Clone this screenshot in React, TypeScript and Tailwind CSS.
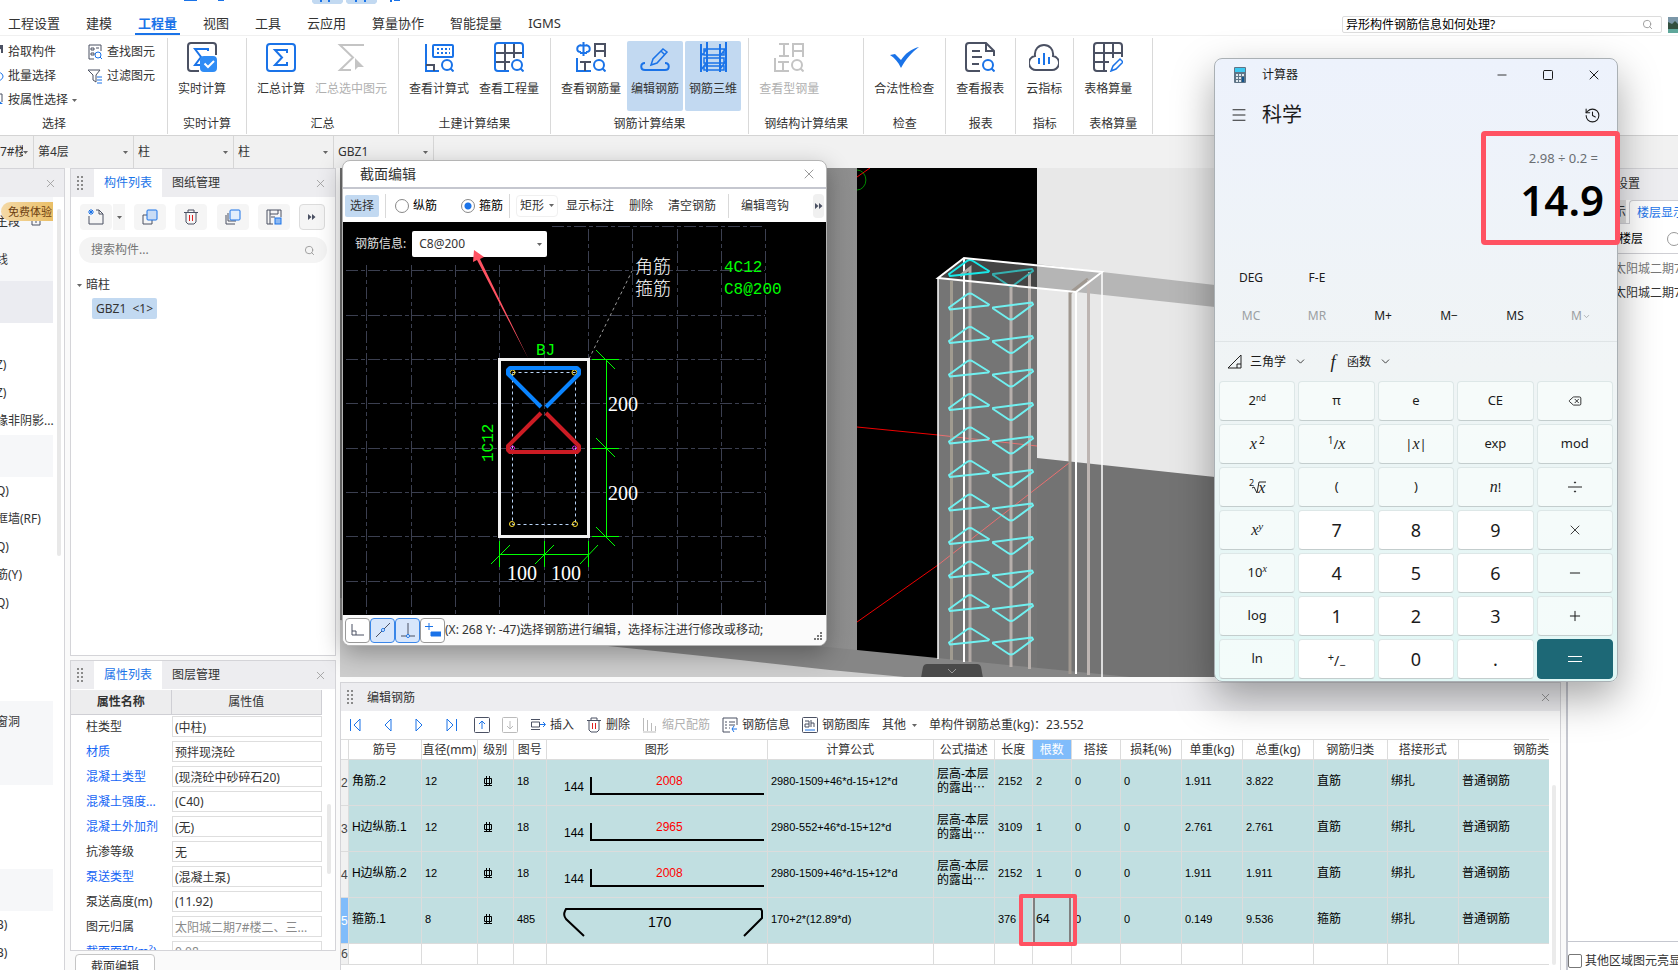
import type { ReactNode } from 'react';
import { ChevronDown, Delete, History, Menu, Minus, Plus, Search, Square, X } from 'lucide-react';
import { clsx } from 'clsx';

const BLUE = '#1a73e8';
const SLATE = '#4b5163';

const menu = ['工程设置', '建模', '工程量', '视图', '工具', '云应用', '算量协作', '智能提量', 'IGMS'];

type Tool = { label: string; icon: ReactNode; state?: 'active' | 'disabled' };

function Ico({ size = 30, children, color = BLUE }: { size?: number; children: ReactNode; color?: string }) {
  return (
    <svg
      width={size}
      height={size}
      viewBox={`0 0 ${size} ${size}`}
      fill="none"
      stroke={color}
      strokeWidth={size > 20 ? 2 : 1}
      className="shrink-0"
      aria-hidden="true"
    >
      {children}
    </svg>
  );
}

function Lens({ color = BLUE }: { color?: string }) {
  return (
    <g stroke={color}>
      <circle cx="23" cy="23" r="5" />
      <path d="M26.5 26.5l3 3" />
    </g>
  );
}

const groups: { label: string; tools: Tool[] }[] = [
  {
    label: '实时计算',
    tools: [
      {
        label: '实时计算',
        icon: (
          <Ico>
            <path d="M12 29H4a3 3 0 0 1-3-3V4a3 3 0 0 1 3-3h22a3 3 0 0 1 3 3v9" stroke={SLATE} />
            <path d="M21 9V7H8l6 8-6 8h6" />
            <rect x="14" y="15" width="15" height="14" rx="3" fill="#2f8cf5" stroke="#2f8cf5" />
            <path d="M17.500 21.500l3.500 3.500 6-6" stroke="#fff" />
          </Ico>
        ),
      },
    ],
  },
  {
    label: '汇总',
    tools: [
      {
        label: '汇总计算',
        icon: (
          <Ico>
            <rect x="1" y="2" width="28" height="27" rx="3" />
            <path d="M21 11V8H9l7 7.500L9 23h12v-3" />
          </Ico>
        ),
      },
      {
        label: '汇总选中图元',
        state: 'disabled',
        icon: (
          <Ico color="#c4c4c4">
            <path d="M28 3H4l13 12.500L4 28h11" />
            <path d="M19 16v12l3-3 6 0z" fill="#c4c4c4" stroke="none" />
          </Ico>
        ),
      },
    ],
  },
  {
    label: '土建计算结果',
    tools: [
      {
        label: '查看计算式',
        icon: (
          <Ico>
            <path d="M2 2v27h13" />
            <path d="M2 23h8v6" stroke={SLATE} />
            <rect x="9" y="3" width="20" height="12" rx="1" />
            <path d="M13 7h13M13 11h13" strokeDasharray="2 2" />
            <Lens />
          </Ico>
        ),
      },
      {
        label: '查看工程量',
        icon: (
          <Ico>
            <path d="M1 11h28M1 20h15M11 1v28M20 1v15" stroke={SLATE} />
            <path d="M15 29H4a3 3 0 0 1-3-3V4a3 3 0 0 1 3-3h22a3 3 0 0 1 3 3v12" />
            <Lens />
          </Ico>
        ),
      },
    ],
  },
  {
    label: '钢筋计算结果',
    tools: [
      {
        label: '查看钢筋量',
        icon: (
          <Ico>
            <path d="M7.500 0v14M5 3C0 4 0 10 5 10M10 3c5 1 5 7 0 7M4 3.500h7M4 11h7" />
            <path d="M19 15V2h10v13M19 9h10" stroke={SLATE} />
            <path d="M1 16v13h14" />
            <path d="M4 20h11M9 20v9" stroke={SLATE} />
            <Lens />
          </Ico>
        ),
      },
      {
        label: '编辑钢筋',
        state: 'active',
        icon: (
          <Ico>
            <path d="M11 23l2-6L23 7l4 3-10 11zM21 9l4 4" strokeWidth="1.500" />
            <path d="M5 21c-5 0-5 7 0 7h20c5 0 5-7 0-7" />
          </Ico>
        ),
      },
      {
        label: '钢筋三维',
        state: 'active',
        icon: (
          <Ico>
            <path d="M3 2v28M9 0v30M22 2v28M28 0v30" />
            <path d="M6 7h20v6H6zM6 16h20v5H6zM6 24h20v4H6zM3 14l6-7M3 28l6-8M22 27l6-8M22 14l6-8" strokeWidth="1.500" />
          </Ico>
        ),
      },
    ],
  },
  {
    label: '钢结构计算结果',
    tools: [
      {
        label: '查看型钢量',
        state: 'disabled',
        icon: (
          <Ico color="#c4c4c4">
            <path d="M5 2h10M10 2v12M5 14h10M19 15V2h10v13M19 9h10M1 16v13h14M4 20h11M9 20v9" />
            <Lens color="#c4c4c4" />
          </Ico>
        ),
      },
    ],
  },
  {
    label: '检查',
    tools: [
      {
        label: '合法性检查',
        icon: (
          <Ico>
            <path d="M1 13l5-1 6 6C17 11 22 7 30 5 22 11 17 17 12 26 9 20 6 16 1 13z" fill={BLUE} stroke="none" />
          </Ico>
        ),
      },
    ],
  },
  {
    label: '报表',
    tools: [
      {
        label: '查看报表',
        icon: (
          <Ico color={SLATE}>
            <path d="M15 29H4a3 3 0 0 1-3-3V4a3 3 0 0 1 3-3h17l8 8v5M21 1v8h8M7 9h8M7 15h10M7 22h7" />
            <Lens />
          </Ico>
        ),
      },
    ],
  },
  {
    label: '指标',
    tools: [
      {
        label: '云指标',
        icon: (
          <Ico color={SLATE}>
            <path d="M8 28a7 7 0 0 1-2-14C5 7 10 3 15 3s10 4 9 11a7 7 0 0 1-2 14z" />
            <path d="M10 16v6M15 11v12M20 15v7" stroke={BLUE} />
          </Ico>
        ),
      },
    ],
  },
  {
    label: '表格算量',
    tools: [
      {
        label: '表格算量',
        icon: (
          <Ico color={SLATE}>
            <path d="M14 29H4a3 3 0 0 1-3-3V4a3 3 0 0 1 3-3h22a3 3 0 0 1 3 3v11M1 11h28M1 20h15M11 1v28M20 1v15" />
            <path d="M18 29l2-5 7-7 3 3-7 7z" stroke={BLUE} strokeWidth="1.500" />
          </Ico>
        ),
      },
    ],
  },
];

const combos = [
  { label: '楼栋', value: '7#楼', cls: 'w-[34px]' },
  { label: '楼层', value: '第4层', cls: 'w-[100px] pl-1' },
  { label: '构件大类', value: '柱', cls: 'w-[100px] pl-1' },
  { label: '构件类型', value: '柱', cls: 'w-[100px] pl-1' },
  { label: '构件', value: 'GBZ1', cls: 'w-[100px] pl-1' },
];

const navItems: { text?: string; cls: string }[] = [
  { cls: 'h-[42px] bg-[#ebecf1]' },
  { cls: 'h-7' },
  { text: 'Z)', cls: 'h-7' },
  { text: 'Z)', cls: 'h-7' },
  { text: '缘非阴影...', cls: 'h-7' },
  { cls: 'h-[42px] bg-[#f6f7f9]' },
  { text: 'Q)', cls: 'h-7' },
  { text: '框墙(RF)', cls: 'h-7' },
  { text: 'Q)', cls: 'h-7' },
  { text: '筋(Y)', cls: 'h-7' },
  { text: 'Q)', cls: 'h-7' },
  { cls: 'h-[84px]' },
  { text: '窗洞', cls: 'h-[42px] bg-[#f6f7f9]' },
  { cls: 'h-[42px] bg-[#f6f7f9]' },
  { cls: 'h-[84px]' },
  { cls: 'h-[42px] bg-[#f6f7f9]' },
  { text: 'B)', cls: 'h-7' },
  { text: 'B)', cls: 'h-7' },
];

const props: { name: string; value: string; blue?: boolean; muted?: boolean }[] = [
  { name: '柱类型', value: '(中柱)' },
  { name: '材质', value: '预拌现浇砼', blue: true },
  { name: '混凝土类型', value: '(现浇砼中砂碎石20)', blue: true },
  { name: '混凝土强度...', value: '(C40)', blue: true },
  { name: '混凝土外加剂', value: '(无)', blue: true },
  { name: '抗渗等级', value: '无' },
  { name: '泵送类型', value: '(混凝土泵)', blue: true },
  { name: '泵送高度(m)', value: '(11.92)' },
  { name: '图元归属', value: '太阳城二期7#楼二、三...', muted: true },
  { name: '截面面积(m²)', value: '0.08', blue: true, muted: true },
];

const columns = [
  { label: '筋号', w: 'w-[73px]' },
  { label: '直径(mm)', w: 'w-[56px]' },
  { label: '级别', w: 'w-[36px]' },
  { label: '图号', w: 'w-[33px]' },
  { label: '图形', w: 'w-[221px]' },
  { label: '计算公式', w: 'w-[166px]' },
  { label: '公式描述', w: 'w-[61px]' },
  { label: '长度', w: 'w-[38px]' },
  { label: '根数', w: 'w-[39px]' },
  { label: '搭接', w: 'w-[49px]' },
  { label: '损耗(%)', w: 'w-[61px]' },
  { label: '单重(kg)', w: 'w-[61px]' },
  { label: '总重(kg)', w: 'w-[71px]' },
  { label: '钢筋归类', w: 'w-[74px]' },
  { label: '搭接形式', w: 'w-[71px]' },
];

const bars = [
  { no: 2, name: '角筋.2', dia: 12, shape: 18, mark: '2008', formula: '2980-1509+46*d-15+12*d', desc: true, len: 2152, count: 2, unit: '1.911', total: '3.822', kind: '直筋' },
  { no: 3, name: 'H边纵筋.1', dia: 12, shape: 18, mark: '2965', formula: '2980-552+46*d-15+12*d', desc: true, len: 3109, count: 1, unit: '2.761', total: '2.761', kind: '直筋' },
  { no: 4, name: 'H边纵筋.2', dia: 12, shape: 18, mark: '2008', formula: '2980-1509+46*d-15+12*d', desc: true, len: 2152, count: 1, unit: '1.911', total: '1.911', kind: '直筋' },
  { no: 5, name: '箍筋.1', dia: 8, shape: 485, mark: '170', formula: '170+2*(12.89*d)', desc: false, len: 376, count: 64, unit: '0.149', total: '9.536', kind: '箍筋' },
];

function Caret() {
  return (
    <svg width="5" height="3" viewBox="0 0 5 3" className="shrink-0" aria-hidden="true">
      <path d="M0 0h5L2.500 3z" fill="#666" />
    </svg>
  );
}

function DoubleArrow() {
  return (
    <svg width="8" height="6" viewBox="0 0 8 6" fill={SLATE} aria-hidden="true">
      <path d="M0 0l3.500 3L0 6zM4 0l3.500 3L4 6z" />
    </svg>
  );
}

function Grip() {
  return (
    <svg width="8" height="15" viewBox="0 0 8 15" fill="#8a8a8a" aria-hidden="true">
      {[0, 4, 8, 12].map((y) => (
        <g key={y}>
          <rect x="0" y={y} width="2" height="2" />
          <rect x="4" y={y} width="2" height="2" />
        </g>
      ))}
    </svg>
  );
}

function TopBar() {
  return (
    <header className="bg-white">
      <div className="flex h-9 items-stretch justify-between border-b border-[#f0f0f0]">
        <nav className="-ml-[5px] flex pt-[13px] text-[13px]">
          {menu.map((m) => (
            <a key={m} href="#" className="flex flex-col px-[10px]">
              <span className={clsx('px-[3px] leading-5', m === '工程量' && 'font-bold text-[#1a73e8]')}>{m}</span>
              {m === '工程量' && <span className="h-[3px] bg-[#1a73e8]" />}
            </a>
          ))}
        </nav>
        <div className="flex items-end gap-1.5 pb-[2px]">
          <label className="flex h-[17px] w-80 items-center rounded-xs border border-[#dcdcdc] pr-2 pl-[3px]">
            <input aria-label="搜索" defaultValue="异形构件钢筋信息如何处理?" className="min-w-0 flex-1 text-xs text-black outline-none" />
            <Search size={11} color="#999" />
          </label>
          <svg width="10" height="16" aria-hidden="true">
            <rect width="10" height="16" fill="#7b97a8" />
            <path d="M0 5l4 2 3-3 3 3v5H0z" fill="#33503f" />
            <path d="M0 12h10v4H0z" fill="#5fa79b" />
          </svg>
        </div>
      </div>
      <Ribbon />
    </header>
  );
}

function SmallTool({ label, children, caret }: { label: string; children: ReactNode; caret?: boolean }) {
  return (
    <button className="flex h-6 items-center gap-1 whitespace-nowrap">
      <Ico size={16} color={SLATE}>{children}</Ico>
      {label}
      {caret && <Caret />}
    </button>
  );
}

function Ribbon() {
  return (
    <div className="flex h-[100px] border-b border-[#d4d4d4] pt-[2px] pb-px text-xs">
      <div className="flex w-[168px] flex-col justify-between border-r border-[#d9d9d9]">
        <div className="-ml-3 flex gap-[10px] pt-[2px]">
          <div className="flex flex-col">
            <SmallTool label="拾取构件"><path d="M8 2h6v6M9 7l5-5M10 4h4v5" strokeWidth="2" /></SmallTool>
            <SmallTool label="批量选择"><path d="M2 8c0-4 12-6 13 0 0 3-3 5-6 5" stroke={BLUE} /></SmallTool>
            <SmallTool label="按属性选择" caret>
              <path d="M2 12V2h12v8" />
              <path d="M8 6v9l3-3h4z" fill={BLUE} stroke="none" />
            </SmallTool>
          </div>
          <div className="flex flex-col">
            <SmallTool label="查找图元">
              <path d="M7 15H2V1h12v6M4 4h3v2H4zM4 9h3v2H4zM9 4h3" />
              <g stroke={BLUE}><circle cx="11" cy="11" r="3" /><path d="M13 13l2 2" /></g>
            </SmallTool>
            <SmallTool label="过滤图元">
              <path d="M1 2h12L9 7v7l-3-2V7z" />
              <path d="M10 9h5M10 12h5M10 15h5" stroke={BLUE} />
            </SmallTool>
          </div>
        </div>
        <div className="w-[108px] text-center leading-5">选择</div>
      </div>
      {groups.map((g) => (
        <section key={g.label} className="flex flex-col justify-between border-r border-[#d9d9d9]">
          <div className="flex gap-0.5 pt-[3px] pr-[7px] pl-1.5">
            {g.tools.map((t) => (
              <button
                key={t.label}
                disabled={t.state === 'disabled'}
                className={clsx(
                  'flex h-[70px] flex-col items-center rounded-xs px-1 pt-px whitespace-nowrap',
                  t.state === 'active' && 'bg-[#c2d9f1]',
                  t.state === 'disabled' && 'text-[#b0b0b0]'
                )}
              >
                {t.icon}
                <span className="mt-[9px] leading-4">{t.label}</span>
              </button>
            ))}
          </div>
          <div className="px-[15px] text-center leading-5">{g.label}</div>
        </section>
      ))}
    </div>
  );
}

function ComboBar() {
  return (
    <div className="flex h-8 bg-[#f1f1f1] text-xs">
      {combos.map((c, i) => (
        <label key={i} className={clsx('flex items-center border-r border-[#d6d6d6] pr-[5px]', c.cls)}>
          <select aria-label={c.label} className="min-w-0 flex-1 appearance-none bg-transparent outline-none">
            <option>{c.value}</option>
          </select>
          <Caret />
        </label>
      ))}
    </div>
  );
}

function NavTree() {
  return (
    <aside className="flex w-[65px] shrink-0 flex-col overflow-hidden border-t border-r border-[#d4d4d8] bg-white">
      <div className="flex h-7 shrink-0 items-center justify-end bg-[#ededf0] pr-[7px]">
        <button aria-label="关闭"><X size={13} strokeWidth={1.5} color="#999" /></button>
      </div>
      <div className="flex gap-1">
        <div className="w-[53px]">
          <div className="h-[84px] bg-[#f6f7f9] pt-[5px]">
            <div className="relative h-6 leading-6">
              <span className="absolute top-2 -left-1">主段</span>
              <svg width="10" height="12" viewBox="0 0 10 12" fill="none" stroke={SLATE} className="absolute top-3 left-[31px]" aria-hidden="true">
                <path d="M1 5h8v6H1zM3 5V1h4v4M5 7v2" />
              </svg>
              <span className="absolute top-0 right-0 h-[19px] rounded-l-full bg-linear-to-r from-[#f4d9a6] to-[#eabf66] pr-px pl-[7px] text-[11px] leading-[19px] text-[#6b3d10]">
                免费体验
              </span>
            </div>
            <div className="mt-[20px] -ml-1 leading-7">线</div>
          </div>
          {navItems.map((n, i) => (
            <div key={i} className={clsx('flex items-center whitespace-nowrap', n.cls)}>
              <span className="-ml-1">{n.text}</span>
            </div>
          ))}
        </div>
        <div className="mt-3 h-[347px] w-1 rounded-full bg-[#e8e8e8]" />
      </div>
    </aside>
  );
}

function PanelTabs({ active, other }: { active: string; other: string }) {
  return (
    <div className="flex h-7 shrink-0 items-center bg-[#ededf0] pl-1.5">
      <Grip />
      <button className="ml-[9px] h-7 bg-white px-[10px] text-[#1a73e8]">{active}</button>
      <button className="h-7 px-[10px]">{other}</button>
      <button aria-label="关闭" className="ml-auto pr-2"><X size={13} strokeWidth={1.5} color="#999" /></button>
    </div>
  );
}

function ToolBtn({ label, children }: { label: string; children: ReactNode }) {
  return (
    <button aria-label={label} className="flex h-[26px] w-8 items-center justify-center rounded-sm bg-[#f5f5f5]">
      {children}
    </button>
  );
}

function TrashIcon() {
  return (
    <Ico size={16} color={SLATE}>
      <path d="M1 3.500h14M5 3V1h6v2M3 4v9l2 2h6l2-2V4" />
      <path d="M6.500 6v6M9.500 6v6" stroke="#e02020" />
    </Ico>
  );
}

function ComponentList() {
  return (
    <section className="flex min-h-0 flex-1 flex-col border border-[#d4d4d8] bg-white">
      <PanelTabs active="构件列表" other="图纸管理" />
      <div className="flex justify-between pt-[7px] pr-[10px] pl-[9px]">
        <div className="flex gap-px">
          <ToolBtn label="新建">
            <Ico size={16} color={SLATE}>
              <path d="M1 7v8h14V5l-4-4H8M11 1v4h4" />
              <path d="M1 1l4 4M5 1L1 5M3 0v6M0 3h6" stroke={BLUE} />
            </Ico>
          </ToolBtn>
          <button aria-label="更多新建" className="flex w-3 items-center justify-center bg-[#f5f5f5]"><Caret /></button>
        </div>
        <ToolBtn label="复制">
          <Ico size={16} color={SLATE}>
            <path d="M5 6H1v9h9v-4" />
            <rect x="5" y="1" width="10" height="10" rx="1" fill="#c9dcf5" stroke={BLUE} />
          </Ico>
        </ToolBtn>
        <ToolBtn label="删除"><TrashIcon /></ToolBtn>
        <ToolBtn label="层间复制">
          <Ico size={16} color={SLATE}>
            <path d="M3 4v8h8M1 6v9h9" />
            <rect x="5" y="1" width="10" height="10" rx="1" fill="#e2eefc" stroke={BLUE} />
          </Ico>
        </ToolBtn>
        <ToolBtn label="存档">
          <Ico size={16} color={SLATE}>
            <path d="M7 15H1V1h14v7M4 1v14M4 5h8V1M5 8h4" />
            <rect x="9" y="9" width="6" height="6" fill="#8db9f2" stroke={BLUE} />
          </Ico>
        </ToolBtn>
        <button aria-label="更多" className="flex h-[26px] w-[26px] items-center justify-center rounded-sm border border-[#dcdcdc] bg-[#f5f5f5]">
          <DoubleArrow />
        </button>
      </div>
      <label className="mx-2 mt-[7px] flex h-[26px] items-center rounded-full bg-[#f4f4f4] px-3">
        <input aria-label="搜索构件" placeholder="搜索构件..." className="min-w-0 flex-1 outline-none placeholder:text-[#757575]" />
        <Search size={11} color="#999" />
      </label>
      <div className="pt-3 pl-1.5">
        <div className="flex h-5 items-center gap-1"><Caret />暗柱</div>
        <button className="mt-[3px] ml-[15px] h-[21px] rounded-xs bg-[#c2d9f1] px-1 whitespace-pre">GBZ1  &lt;1&gt;</button>
      </div>
    </section>
  );
}

function PropertyPanel() {
  return (
    <section className="mt-1 flex h-[291px] shrink-0 flex-col overflow-hidden border border-[#d4d4d8] bg-white">
      <PanelTabs active="属性列表" other="图层管理" />
      <div className="flex pt-px">
        <table className="min-w-0 flex-1 table-fixed border-collapse">
          <thead>
            <tr className="h-6 border-b border-[#cfcfd4] bg-[#ededee]">
              <th className="w-[100px] border-r border-[#cfcfd4] font-bold">属性名称</th>
              <th className="border-r border-[#cfcfd4] font-normal">属性值</th>
            </tr>
          </thead>
          <tbody>
            {props.map((p) => (
              <tr key={p.name} className="h-[25px]">
                <td className={clsx('pl-[15px] whitespace-nowrap', p.blue && 'text-[#1565f5]')}>{p.name}</td>
                <td className="pl-px">
                  <input
                    aria-label={p.name}
                    defaultValue={p.value}
                    className={clsx('block h-[21px] w-full border border-[#dedede] px-[2px] outline-none', p.muted && 'text-[#8a8a8a]')}
                  />
                </td>
              </tr>
            ))}
          </tbody>
        </table>
        <div className="mt-[114px] mr-1 ml-[5px] h-[70px] w-1 rounded-full bg-[#e8e8e8]" />
      </div>
    </section>
  );
}

const tiers = [0, 1, 2, 3, 4, 5, 6, 7, 8, 9, 10, 11];

function Viewport() {
  return (
    <div className="relative min-h-0 flex-1 overflow-hidden bg-[#8e8e8e]">
      <svg viewBox="340 168 1221 510" preserveAspectRatio="xMinYMin slice" className="absolute inset-0 h-full w-full" fill="none" aria-label="钢筋三维">
        <defs>
          <linearGradient id="wall" x1="0" x2="1">
            <stop offset="0" stopColor="#6e6e6e" />
            <stop offset="1" stopColor="#8f8f8f" />
          </linearGradient>
        </defs>
        <rect x="340" y="168" width="517" height="510" fill="url(#wall)" />
        <rect x="857" y="168" width="180" height="510" fill="#000" />
        <rect x="1037" y="168" width="525" height="510" fill="#e8e8e8" />
        <path d="M1037 458l178 19 347 36v165h-525z" fill="#737373" />
        <path d="M1102 272l113 13 347 38v22l-347-38-139-15z" fill="#b6b6b6" />
        <path d="M938 278l99 10v390h-99z" fill="#757575" />
        <path d="M938 278l26-20 73 6v24z" fill="#444" />
        <path d="M1037 264l65 8-26 20-39-4z" fill="#b5b5b5" />
        <path d="M340 598l517 52 283 28H340z" fill="#868686" />
        <path d="M340 620l268 26 132 14 90 10 85 8H340z" fill="#cdcdcd" />
        <g stroke="#e00">
          <path d="M857 427l81 8M857 622l81-57M857 177l13-9" />
          <path d="M938 435l99 11M938 565l131-102" stroke="#e87070" />
        </g>
        <path d="M857 170a8 9 0 0 1 0 20" stroke="#080" />
        <path d="M1076 292V674M964 258V662" stroke="#fff" strokeWidth="2" />
        <path d="M938 278V659M1102 272V677" stroke="#fff" strokeWidth="1.500" />
        <path d="M951.500 281V660" stroke="#a09b90" strokeWidth="3" />
        <path d="M960 276l10-8V662" stroke="#b0a8a4" strokeWidth="3" />
        <path d="M1011 286V667M1029.500 272V669" stroke="#b8b0ac" strokeWidth="3" />
        <path d="M1070 674V293l18-14" stroke="#a09890" strokeWidth="3" />
        <path d="M1088.500 280V675" stroke="#bdb5b2" strokeWidth="3" />
        {tiers.map((t) => (
          <g key={t} transform={`translate(0 ${t * 33.5})`} strokeWidth="2" strokeLinejoin="round" stroke={t ? '#70f0f0' : '#18e8e8'}>
            <path d="M949 274l18-13q3-2 6 0l16 10-1 1-38 4z" />
            <path d="M993 274l39-5 1 2-19 14q-3 2-6 0l-15-10z" stroke={t ? '#70f0f0' : '#35b0b0'} />
          </g>
        ))}
        <path d="M938 278l26-20 138 14-26 20z" stroke="#fff" strokeWidth="2" />
        <path d="M921 678l2-11q1-3 4-3h50q3 0 4 3l2 11z" fill="#4a4a4a" />
        <path d="M948 669l4 4 4-4" stroke="#999" />
      </svg>
    </div>
  );
}

function BarShape({ mark, stirrup }: { mark: string; stirrup: boolean }) {
  return (
    <svg width="220" height="42" viewBox="0 0 220 42" fill="none" stroke="#000" strokeWidth="2" className="block">
      {stirrup ? (
        <>
          <path d="M37 36L19 19q-3-4-1-8l1-2h195l1 2v7l-18 18" />
          <text x="101" y="27" fontSize="14" fill="#000" stroke="none">{mark}</text>
        </>
      ) : (
        <>
          <path d="M44 15v17h173" />
          <text x="17" y="29" fontSize="12" fill="#000" stroke="none">144</text>
          <text x="109" y="23" fontSize="12" fill="#f00" stroke="none">{mark}</text>
        </>
      )}
    </svg>
  );
}

function RebarTool({ label, icon, disabled }: { label: string; icon: ReactNode; disabled?: boolean }) {
  return (
    <button disabled={disabled} className={clsx('flex items-center gap-1 whitespace-nowrap', disabled && 'text-[#b0b0b0]')}>
      {icon}
      {label}
    </button>
  );
}

function RebarPanel() {
  return (
    <section className="mt-[5px] shrink-0 border-t border-r border-l border-[#d4d4d8] bg-white pb-[5px]">
      <div className="flex h-7 items-center bg-[#ededf0] pr-2 pl-1.5">
        <Grip />
        <h2 className="ml-3 pt-px">编辑钢筋</h2>
        <button aria-label="关闭" className="ml-auto"><X size={13} strokeWidth={1.5} color="#888" /></button>
      </div>
      <div className="flex h-7 items-center gap-3 pl-2">
        <div className="mr-1 flex gap-[15px]">
          {[
            ['首行', 'M1.500 2v12M11 2v12L5 8z'],
            ['上一行', 'M11 2v12L5 8z'],
            ['下一行', 'M5 2v12l6-6z'],
            ['末行', 'M5 2v12l6-6zM14.500 2v12'],
          ].map(([name, d]) => (
            <button key={name} aria-label={name}><Ico size={16}><path d={d} /></Ico></button>
          ))}
        </div>
        <button aria-label="上移">
          <Ico size={16} color={SLATE}><rect x="0.500" y="0.500" width="15" height="15" rx="1" /><path d="M8 12V4M5 7l3-3 3 3" stroke={BLUE} /></Ico>
        </button>
        <button aria-label="下移" disabled>
          <Ico size={16} color="#bbb"><rect x="0.500" y="0.500" width="15" height="15" rx="1" /><path d="M8 4v8M5 9l3 3 3-3" /></Ico>
        </button>
        <RebarTool label="插入" icon={<Ico size={16} color={SLATE}><path d="M1 2.500h9M1 12.500h9M1.500 5h8v5h-8z" /><path d="M10 7.500h5M13 5l2.500 2.500L13 10" stroke={BLUE} /></Ico>} />
        <RebarTool label="删除" icon={<TrashIcon />} />
        <RebarTool label="缩尺配筋" disabled icon={<Ico size={16} color="#bbb"><path d="M1.500 1v13M5.500 3v11M9.500 6v8M13.500 9v5M1 15h13" /></Ico>} />
        <RebarTool label="钢筋信息" icon={<Ico size={16} color={SLATE}><path d="M8 15H1V1h14v7M3 5h2M7 5h6M3 8h2M7 8h6M3 11h2M7 11h1" /><path d="M10 12h5M12 9l-2 3 2 3" stroke={BLUE} /></Ico>} />
        <RebarTool label="钢筋图库" icon={<Ico size={16} color={SLATE}><rect x="0.500" y="0.500" width="15" height="15" rx="1" /><path d="M3 4h4v6H3V7h4M9 3v7M9 6h3v4" /><path d="M3 13h10" stroke={BLUE} /></Ico>} />
        <button className="flex items-center gap-1.5">其他<Caret /></button>
        <span>单构件钢筋总重(kg)：23.552</span>
      </div>
      <div className="flex">
        <table className="min-w-0 flex-1 table-fixed border-collapse">
          <thead>
            <tr className="h-5">
              <th aria-label="行号" className="w-[7px] border border-l-0 border-[#dcdcdc]" />
              {columns.map((c) => (
                <th
                  key={c.label}
                  className={clsx(
                    'border border-[#dcdcdc] p-0 font-normal whitespace-nowrap',
                    c.w,
                    c.label === '根数' && 'bg-[#80bcfb] text-white'
                  )}
                >
                  {c.label}
                </th>
              ))}
              <th className="border-y border-[#dcdcdc] p-0 text-right font-normal">钢筋类</th>
            </tr>
          </thead>
          <tbody className="text-black">
            {bars.map((b) => (
              <tr
                key={b.no}
                className="h-[46px] bg-[#c1dfe1] font-['Liberation_Sans','Noto_Sans_CJK_SC',sans-serif] text-[11px] [&>td]:border [&>td]:border-[#dcdcdc] [&>td]:px-[3px] [&>td]:pt-0 [&>td]:pb-[3px] [&>td]:whitespace-nowrap"
              >
                <th className={clsx('border-b border-[#dcdcdc] p-0 text-xs font-normal', b.no === 5 ? 'bg-[#80bcfb] text-white' : 'bg-[#f1f1f1] text-[#444]')}>
                  {b.no}
                </th>
                <td className="text-xs">{b.name}</td>
                <td>{b.dia}</td>
                <td>
                  <svg width="10" height="11" viewBox="0 0 10 11" fill="none" stroke="#000" className="ml-0.5" aria-label="三级钢">
                    <path d="M1.500 2.500h7v5h-7zM3.500 0v10M6.500 0v10M1 9.500h8" />
                  </svg>
                </td>
                <td>{b.shape}</td>
                <td className="!p-0"><BarShape mark={b.mark} stirrup={b.no === 5} /></td>
                <td>{b.formula}</td>
                <td className="text-xs leading-[14px]">{b.desc && <>层高-本层<br />的露出⋯</>}</td>
                <td>{b.len}</td>
                <td className={clsx(b.no === 5 && "relative font-['Noto_Sans',sans-serif] text-xs")}>
                  {b.count}
                  {b.no === 5 && (
                    <>
                      <span className="absolute inset-y-0 left-0 border-l-2 border-[#808080]" />
                      <span className="absolute inset-y-0 right-0 border-r-2 border-[#808080]" />
                      <span className="absolute -top-1 -right-1.5 -bottom-[3px] -left-3.5 z-10 rounded-xs border-4 border-[#ff5262]" />
                    </>
                  )}
                </td>
                <td>0</td>
                <td>0</td>
                <td>{b.unit}</td>
                <td>{b.total}</td>
                <td className="text-xs">{b.kind}</td>
                <td className="text-xs">绑扎</td>
                <td className="!border-r-0 text-xs">普通钢筋</td>
              </tr>
            ))}
            <tr className="h-[21px] [&>td]:border [&>td]:border-[#dcdcdc]">
              <th className="border-b border-[#dcdcdc] bg-[#f1f1f1] p-0 font-normal text-[#444]">6</th>
              {columns.map((c) => <td key={c.label} />)}
              <td className="!border-r-0" />
            </tr>
          </tbody>
        </table>
        <div className="mt-[46px] mr-1 ml-[3px] w-1 rounded-full bg-[#ebebeb]" />
      </div>
    </section>
  );
}

function DisplayPanel() {
  return (
    <aside className="ml-[5px] flex w-[112px] shrink-0 flex-col overflow-hidden border-l-2 border-[#c5c7cf] bg-white whitespace-nowrap">
      <div className="h-8 shrink-0 border-t border-[#d4d4d8] bg-[#ededf0] pl-[24px] leading-[30px]">显示设置</div>
      <div className="flex h-6 shrink-0 border-b border-[#cfcfd4]">
        <button className="w-[63px] bg-[#dcdcdc] pl-[10px]">图元显示</button>
        <button className="ml-[3px] h-6 rounded-tl-sm border-t border-l border-[#cfcfd4] bg-white pr-1 pl-[7px] text-[#1a73e8]">楼层显示</button>
      </div>
      <div className="flex h-[30px] shrink-0 items-center border-b border-[#cfcfd4] text-black">
        <label className="flex items-center gap-1 pl-[9px]">
          <input type="radio" name="floor" defaultChecked className="size-3.5" />
          当前楼层
        </label>
        <label className="ml-6 flex items-center gap-1">
          <input type="radio" name="floor" className="size-3.5 appearance-none rounded-full border border-[#999]" />
          全部楼层
        </label>
      </div>
      <ul className="flex-1 overflow-hidden border-b border-[#c5c7cf] pt-[3px] pl-[46px] leading-6">
        <li className="text-[#777]">太阳城二期7#楼</li>
        <li>太阳城二期7#楼</li>
      </ul>
      <label className="flex h-7 shrink-0 items-center gap-[3px] pt-2.5">
        <input type="checkbox" className="size-3.5 shrink-0 appearance-none rounded-xs border border-[#777] bg-white" />
        其他区域图元亮显
      </label>
    </aside>
  );
}

const gridX = [366.5, 411.5, 455.5, 499.5, 544.5];
const gridX2 = [588.5, 632.5, 677.5, 721.5, 765.5];
const gridY = [270.5, 315.5, 359.5, 403.5, 448.5, 492.5, 536.5, 581.5];

function SectionDrawing() {
  return (
    <svg viewBox="343 222 483 393" className="block w-full" fill="none" aria-label="截面图">
      <g stroke="#3b3f50" strokeDasharray="12 3 4 3">
        {gridX.map((x) => <path key={x} d={`M${x} 265V615`} />)}
        {gridX2.map((x) => <path key={x} d={`M${x} 229V615`} />)}
        {gridY.map((y) => <path key={y} d={`M346 ${y}H765`} />)}
        <path d="M552 226.500H765" />
      </g>
      <path d="M589 359l43-88" stroke="#999" strokeDasharray="3 3" />
      <rect x="512.500" y="372.500" width="63" height="152" stroke="#b8d4f8" strokeDasharray="3 3" />
      <rect x="499.500" y="359.500" width="89" height="177" stroke="#f2f2f2" strokeWidth="3" />
      <g stroke="#ffe030">
        <circle cx="512.500" cy="372.500" r="2.500" />
        <circle cx="574.500" cy="372.500" r="2.500" />
        <circle cx="512" cy="524" r="2.500" />
        <circle cx="575" cy="524" r="2.500" />
      </g>
      <g stroke="#e020e0">
        <circle cx="512.500" cy="448" r="2" />
        <circle cx="574.500" cy="448" r="2" />
      </g>
      <g strokeWidth="4" strokeLinejoin="round">
        <path d="M541 407l-33-33v-4l2-2h67l2 2v4l-33 33" stroke="#0a84ff" />
        <path d="M541 413l-33 33v4l2 2h67l2-2v-4l-33-33" stroke="#cc1c24" />
      </g>
      <g stroke="#00ff00">
        <path d="M606.500 359V537M592 359.500h27M592 448.500h27M592 536.500h27M596 350l19 19M596 438l19 19M596 527l19 19" />
        <path d="M499 554.500h90M499.500 541v26M544.500 541v26M588.500 541v26M491 564l19-19M535 564l19-19M580 564l18-19" />
      </g>
      <g fill="#00ff00" className="font-['Liberation_Mono',monospace]" fontSize="16">
        <text x="536" y="355">BJ</text>
        <text x="724" y="272">4C12</text>
        <text x="724" y="294">C8@200</text>
        <text transform="translate(493 462) rotate(-90)">1C12</text>
      </g>
      <g fill="#fff" className="font-['Noto_Sans_CJK_SC',sans-serif] font-light" fontSize="18">
        <text x="635" y="273">角筋</text>
        <text x="635" y="295">箍筋</text>
      </g>
      <g fill="#fff" className="font-['Liberation_Serif',serif]" fontSize="20">
        <text x="608" y="411">200</text>
        <text x="608" y="500">200</text>
        <text x="507" y="580">100</text>
        <text x="551" y="580">100</text>
      </g>
    </svg>
  );
}

function SnapBtn({ label, on, children }: { label: string; on?: boolean; children: ReactNode }) {
  return (
    <button
      aria-label={label}
      className={clsx(
        'flex h-[25px] w-[25px] items-center justify-center rounded-sm border',
        on ? 'border-[#3a86e8] bg-[#d8e6fb]' : 'border-[#999] bg-white'
      )}
    >
      <Ico size={16} color={SLATE}>{children}</Ico>
    </button>
  );
}

function SectionDialog() {
  return (
    <section className="absolute top-40 left-[342px] w-[485px] overflow-hidden rounded-lg border border-[#b5b5b5] bg-white shadow-[0_8px_24px_rgba(0,0,0,0.3)]">
      <div className="flex h-[28px] items-center justify-between border-b-2 border-[#c5c7cf] pr-[9px] pl-[17px]">
        <h2 className="text-sm">截面编辑</h2>
        <button aria-label="关闭"><X size={16} strokeWidth={1} color="#666" /></button>
      </div>
      <div className="flex h-[33px] items-center whitespace-nowrap">
        <button className="ml-0.5 h-[22px] rounded-xs bg-[#c2d9f1] px-[5px]">选择</button>
        <div className="mx-1.5 h-6 border-l border-[#d9d9d9]" />
        <label className="ml-[3px] flex items-center gap-1 text-black">
          <input type="radio" name="bar" className="size-3.5 appearance-none rounded-full border border-[#888]" />
          纵筋
        </label>
        <label className="ml-6 flex items-center gap-1 text-black">
          <input
            type="radio"
            name="bar"
            defaultChecked
            className="size-3.5 appearance-none rounded-full border border-[#888] bg-[radial-gradient(circle,#1a73e8_3px,white_4px)]"
          />
          箍筋
        </label>
        <div className="mx-1.5 h-6 border-l border-[#d9d9d9]" />
        <button className="flex h-[22px] items-center gap-[5px] rounded-sm border border-[#f0f0f0] px-[3px]">矩形<Caret /></button>
        <button className="ml-2">显示标注</button>
        <button className="ml-[15px]">删除</button>
        <button className="ml-[15px]">清空钢筋</button>
        <div className="mx-3 h-6 border-l border-[#d9d9d9]" />
        <button>编辑弯钩</button>
        <button aria-label="更多" className="mr-0.5 ml-auto flex h-6 w-[11px] items-center justify-center rounded-sm bg-[#f0f0f0]">
          <DoubleArrow />
        </button>
      </div>
      <div className="relative bg-black">
        <SectionDrawing />
        <label className="absolute top-[9px] left-3 flex h-[26px] items-center gap-1.5 text-[#e0e0e0]">
          钢筋信息:
          <span className="flex h-[26px] w-[135px] items-center rounded-xs bg-white pr-[5px] pl-[7px] text-[#333]">
            <select className="min-w-0 flex-1 appearance-none outline-none">
              <option>C8@200</option>
            </select>
            <Caret />
          </span>
        </label>
        <svg width="58" height="110" viewBox="0 0 58 110" className="absolute top-7 left-[129px]" aria-hidden="true">
          <path d="M2 0l10 7-4 2 48 99L5 10l-4 2z" fill="#ff5262" />
        </svg>
      </div>
      <div className="flex h-[30px] items-center bg-[#fbfbfb] pl-0.5">
        <SnapBtn label="正交"><path d="M2 2v11h12M2 9h4v4" /></SnapBtn>
        <SnapBtn label="中点" on><path d="M1 15L15 1" /><circle cx="8" cy="8" r="1.500" fill="#fff" stroke={BLUE} /></SnapBtn>
        <SnapBtn label="垂点" on><path d="M8 1v12M1 14h14" /><circle cx="8" cy="14" r="1.500" fill="#fff" stroke={BLUE} /></SnapBtn>
        <SnapBtn label="动态输入"><path d="M4 1v7M0 4.500h8" stroke={BLUE} /><path d="M6 10h10v4H6z" fill={BLUE} stroke={BLUE} /></SnapBtn>
        <span>(X: 268 Y: -47)选择钢筋进行编辑，选择标注进行修改或移动;</span>
        <svg width="8" height="8" viewBox="0 0 8 8" fill="#777" className="mt-3 mr-1 ml-auto" aria-hidden="true">
          <path d="M6 0h2v2H6zM3 3h2v2H3zM6 3h2v2H6zM0 6h2v2H0zM3 6h2v2H3zM6 6h2v2H6z" />
        </svg>
      </div>
    </section>
  );
}

const it = "font-['Liberation_Serif',serif] italic text-base";

const keys: { id: string; node: ReactNode; num?: boolean }[] = [
  { id: '2nd', node: <>2<sup className="text-[8px]">nd</sup></> },
  { id: 'pi', node: 'π' },
  { id: 'e', node: 'e' },
  { id: 'CE', node: 'CE' },
  { id: 'back', node: <Delete size={14} strokeWidth={1.5} /> },
  { id: 'sq', node: <><span className={it}>x</span><sup className="ml-0.5 text-[10px]">2</sup></> },
  { id: 'inv', node: <><sup className="text-[10px]">1</sup>/<span className={it}>x</span></> },
  { id: 'abs', node: <>|<span className={it}>x</span>|</> },
  { id: 'exp', node: 'exp' },
  { id: 'mod', node: 'mod' },
  {
    id: 'root',
    node: (
      <span className="flex items-center">
        <sup className="text-[9px]">2</sup>
        <svg width="14" height="13" viewBox="0 0 14 13" fill="none" stroke="#222" className="-mr-2.5 -ml-0.5">
          <path d="M0 7l2-1 3 6L7 1h7" />
        </svg>
        <span className={clsx(it, 'mt-px ml-0.5 leading-4')}>x</span>
      </span>
    ),
  },
  { id: '(', node: '(' },
  { id: ')', node: ')' },
  { id: 'fact', node: <><span className={it}>n</span>!</> },
  {
    id: 'div',
    node: (
      <svg width="14" height="12" viewBox="0 0 14 12" stroke="#222" fill="#222">
        <path d="M0 6h14" />
        <circle cx="7" cy="1.500" r="0.600" />
        <circle cx="7" cy="10.500" r="0.600" />
      </svg>
    ),
  },
  { id: 'pow', node: <><span className={it}>x</span><sup className="font-['Liberation_Serif',serif] text-[11px] italic">y</sup></> },
  { id: '7', node: '7', num: true },
  { id: '8', node: '8', num: true },
  { id: '9', node: '9', num: true },
  { id: 'mul', node: <X size={16} strokeWidth={1.25} /> },
  { id: 'ten', node: <>10<sup className="font-['Liberation_Serif',serif] text-[10px] italic">x</sup></> },
  { id: '4', node: '4', num: true },
  { id: '5', node: '5', num: true },
  { id: '6', node: '6', num: true },
  { id: 'sub', node: <Minus size={16} strokeWidth={1.5} /> },
  { id: 'log', node: 'log' },
  { id: '1', node: '1', num: true },
  { id: '2', node: '2', num: true },
  { id: '3', node: '3', num: true },
  { id: 'add', node: <Plus size={16} strokeWidth={1.5} /> },
  { id: 'ln', node: 'ln' },
  { id: 'neg', node: <span className="text-sm"><sup className="text-[11px]">+</sup>/<sub className="text-[11px]">−</sub></span>, num: true },
  { id: '0', node: '0', num: true },
  { id: '.', node: '.', num: true },
  {
    id: 'eq',
    node: (
      <svg width="14" height="6" viewBox="0 0 14 6" stroke="#fff">
        <path d="M0 0.500h14M0 5.500h14" />
      </svg>
    ),
  },
];

function Calculator() {
  return (
    <section className="absolute top-[58px] left-[1214px] flex w-[404px] flex-col rounded-lg border border-[#aab0b4] bg-linear-to-b from-[#edf2fc] via-[#f0f4f5] to-[#e0f7f5] text-[#1b1b1b] shadow-[0_16px_40px_rgba(0,0,0,0.35)]">
      <div className="flex h-8 items-center pl-[19px]">
        <svg width="12" height="16" viewBox="0 0 12 16" aria-hidden="true">
          <rect width="12" height="16" rx="1" fill="#5f7486" />
          <rect x="1" y="1" width="10" height="4" fill="#3cc8f0" />
          <path d="M2 7h2v2H2zM5 7h2v2H5zM8 7h2v2H8zM2 10h2v2H2zM5 10h2v2H5zM2 13h2v2H2zM5 13h2v2H5z" fill="#dfe8ee" />
          <path d="M8 10h2v5H8z" fill="#12548c" />
        </svg>
        <span className="ml-4">计算器</span>
        <button aria-label="最小化" className="ml-auto flex w-[46px] justify-center"><Minus size={14} strokeWidth={1.5} /></button>
        <button aria-label="最大化" className="flex w-[46px] justify-center"><Square size={12} strokeWidth={2} /></button>
        <button aria-label="关闭" className="flex w-[46px] justify-center"><X size={16} strokeWidth={1.5} /></button>
      </div>
      <div className="flex h-12 items-center pr-4 pl-[15px]">
        <button aria-label="菜单"><Menu size={18} strokeWidth={1.25} /></button>
        <h1 className="ml-[14px] text-xl">科学</h1>
        <button aria-label="历史记录" className="ml-auto"><History size={17} strokeWidth={1.5} /></button>
      </div>
      <div className="relative flex flex-col items-end pt-[9px]">
        <span className="pr-[19px] text-[13px] leading-5 text-[#6a6e72]">2.98 ÷ 0.2 =</span>
        <output className="pr-[13px] pt-[3px] text-[42px] leading-[58px] font-semibold text-black">14.9</output>
        <span className="absolute -top-2 -right-[3px] h-[114px] w-[139px] rounded-sm border-[5px] border-[#ff5262]" />
      </div>
      <div className="mx-[3px] mt-[30px] grid grid-cols-6">
        <button className="h-[38px]">DEG</button>
        <button className="h-[38px]">F-E</button>
      </div>
      <div className="mx-[3px] grid h-[38px] grid-cols-6">
        <button disabled className="text-[#9b9fa2]">MC</button>
        <button disabled className="text-[#9b9fa2]">MR</button>
        <button>M+</button>
        <button>M−</button>
        <button>MS</button>
        <button disabled className="flex items-center justify-center text-[#9b9fa2]">M<ChevronDown size={9} /></button>
      </div>
      <div className="mt-[6px] flex h-10 items-center border-t border-[#dfe4e6] pl-3">
        <button className="flex items-center gap-2">
          <svg width="15" height="15" viewBox="0 0 15 15" fill="none" stroke="#222" aria-hidden="true">
            <path d="M1 14L14 1v13zM14 10h-4v4" />
          </svg>
          三角学
          <ChevronDown size={13} strokeWidth={1.5} />
        </button>
        <button className="ml-5 flex items-center gap-2">
          <span className="w-3 font-['Liberation_Serif',serif] text-lg leading-5 italic">f</span>
          函数
          <ChevronDown size={13} strokeWidth={1.5} />
        </button>
      </div>
      <div className="grid grid-cols-5 gap-[3px] px-1 pb-0.5">
        {keys.map((k) => (
          <button
            key={k.id}
            aria-label={k.id}
            className={clsx(
              'flex h-10 items-center justify-center rounded-sm border',
              k.id === 'eq' && 'border-[#1d6876] bg-[#1d6876]',
              k.id !== 'eq' && 'border-[#dde7e7] border-b-[#c3cdcd]',
              k.num && 'bg-white text-lg',
              !k.num && k.id !== 'eq' && 'bg-[#f7fcfb]/80 text-[13px]'
            )}
          >
            <span>{k.node}</span>
          </button>
        ))}
      </div>
    </section>
  );
}

export default function App() {
  return (
    <div className="relative flex h-screen flex-col overflow-hidden bg-[#fafafa] font-['Noto_Sans','Noto_Sans_CJK_SC',sans-serif] text-xs text-[#333]">
      <svg width="400" height="4" viewBox="0 0 400 4" className="absolute top-0 left-0" aria-hidden="true">
        <path d="M312 0h31v2l-2 2h-27l-2-2zM346 0h31v2l-2 2h-27l-2-2z" fill="#c2d9f1" />
        <path d="M184 0h13v1h-13zM218 0h6v1h-6zM320 0h2v2h-2zM328 0h2v2h-2zM355 0h2v2h-2zM364 0h2v2h-2zM390 0h2v2h-2zM394 0h7v1h-7z" fill={BLUE} />
      </svg>
      <TopBar />
      <ComboBar />
      <div className="flex min-h-0 flex-1">
        <NavTree />
        <div className="mr-1 ml-[5px] flex w-[266px] shrink-0 flex-col">
          <ComponentList />
          <PropertyPanel />
          <div className="h-[19px] shrink-0 overflow-hidden pt-[3px] pl-[5px]">
            <button className="h-6 rounded-sm border border-[#c5c5c5] bg-white px-[15px] leading-6">截面编辑</button>
          </div>
        </div>
        <main className="flex min-w-0 flex-1 flex-col">
          <Viewport />
          <RebarPanel />
        </main>
        <DisplayPanel />
      </div>
      <SectionDialog />
      <Calculator />
    </div>
  );
}
